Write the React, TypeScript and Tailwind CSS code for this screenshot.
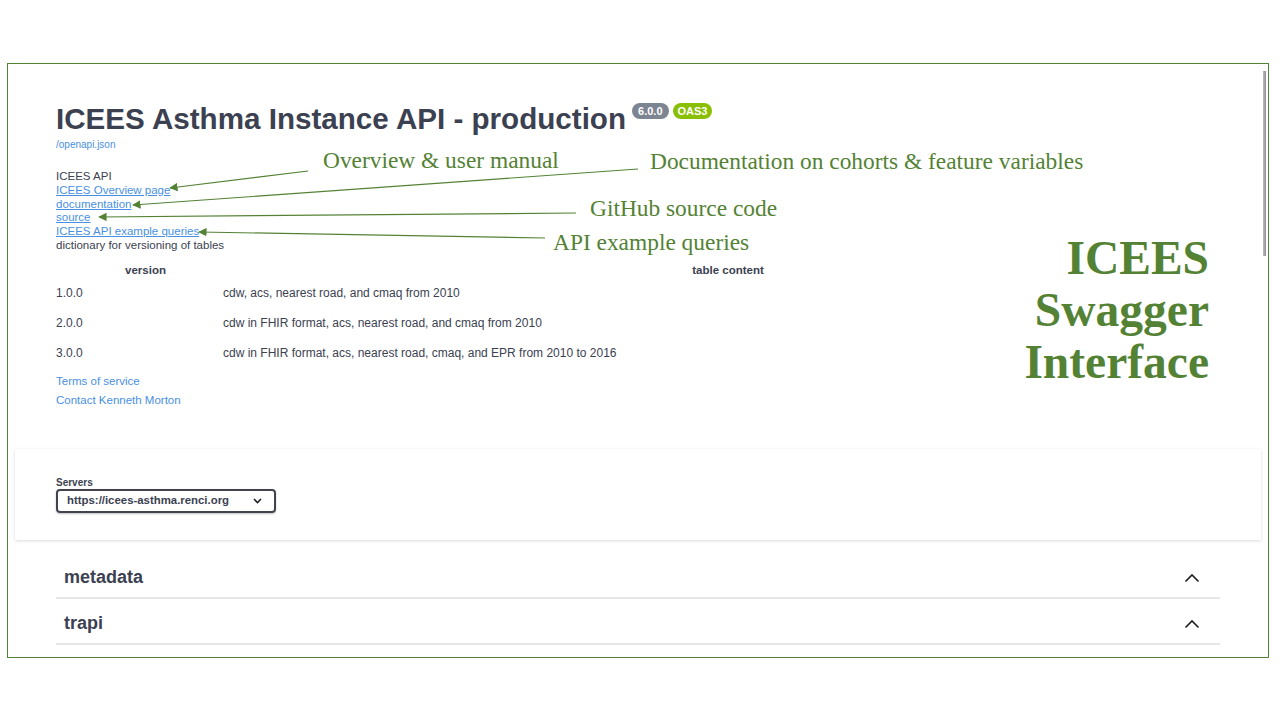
import React from "react";

const GREEN = "#548235";

const rows = [
  ["1.0.0", "cdw, acs, nearest road, and cmaq from 2010"],
  ["2.0.0", "cdw in FHIR format, acs, nearest road, and cmaq from 2010"],
  ["3.0.0", "cdw in FHIR format, acs, nearest road, cmaq, and EPR from 2010 to 2016"],
];

const ChevronUp = () => (
  <svg width="16" height="10" viewBox="0 0 16 10" className="mr-[20px]">
    <polyline points="1.5,8.5 8,2 14.5,8.5" fill="none" stroke="#1f1f1f" strokeWidth="1.6" />
  </svg>
);

const Arrows = () => (
  <svg className="absolute left-0 top-0 pointer-events-none" width="1280" height="720">
    <defs>
      <marker id="ah" viewBox="0 0 10 10" refX="9" refY="5" markerWidth="7" markerHeight="7" orient="auto-start-reverse">
        <path d="M0,0 L10,5 L0,10 z" fill={GREEN} />
      </marker>
    </defs>
    <g stroke={GREEN} strokeWidth="1.2" fill="none">
      <line x1="308" y1="171" x2="170" y2="188" markerEnd="url(#ah)" />
      <line x1="638" y1="169" x2="133" y2="205" markerEnd="url(#ah)" />
      <line x1="576" y1="213" x2="99" y2="217" markerEnd="url(#ah)" />
      <line x1="545" y1="238" x2="199" y2="232" markerEnd="url(#ah)" />
    </g>
  </svg>
);

const TagRow = ({ name }: { name: string }) => (
  <div className="flex items-center justify-between h-[46px] pt-[6px] border-b-2 border-[#e6e6e6]">
    <span className="pl-[8px] text-[18px] font-bold text-[#3b4151]">{name}</span>
    <ChevronUp />
  </div>
);

export default function App() {
  return (
    <div className="relative w-[1280px] h-[720px] bg-white overflow-hidden" style={{ fontFamily: '"Liberation Sans", Arial, sans-serif' }}>
      <div className="ml-[7px] mt-[63px] w-[1262px] h-[595px] border-[1.5px] border-solid border-[#548235] relative overflow-hidden">
        {/* scrollbar */}
        <div className="absolute right-[2px] top-[7px] w-[3px] h-[185px] bg-gradient-to-r from-[#bdbdbd] to-[#8f8f8f]" />

        {/* info */}
        <div className="pl-[48px] pt-[37px] text-[#3b4151]">
          <div className="flex items-start">
            <h1 className="text-[29.6px] font-bold leading-[36px] text-[#3b4151]">ICEES Asthma Instance API - production</h1>
            <div className="flex gap-[4px] ml-[6px] mt-[2px]">
              <span className="h-[16px] px-[6px] rounded-full bg-[#7d8492] text-white text-[11px] font-bold leading-[16px]">6.0.0</span>
              <span className="h-[16px] px-[5px] rounded-full bg-[#89bf04] text-white text-[11px] font-bold leading-[16px]">OAS3</span>
            </div>
          </div>
          <div className="mt-[1px] text-[10px] leading-[14px] text-[#4990e2]">/openapi.json</div>

          <div className="mt-[18px] text-[11.5px] leading-[13.8px]">
            <div>ICEES API</div>
            <div><a className="text-[#4990e2] underline">ICEES Overview page</a></div>
            <div><a className="text-[#4990e2] underline">documentation</a></div>
            <div><a className="text-[#4990e2] underline">source</a></div>
            <div><a className="text-[#4990e2] underline">ICEES API example queries</a></div>
            <div>dictionary for versioning of tables</div>
          </div>

          <table className="mt-[9px] w-[1177px] text-[12px] border-collapse">
            <thead>
              <tr className="h-[16px]">
                <th className="w-[167px] pl-[12px] text-center font-bold text-[11.5px] leading-[16px]">version</th>
                <th className="text-center font-bold text-[11.5px] leading-[16px]">table content</th>
              </tr>
            </thead>
            <tbody>
              {rows.map(([v, c]) => (
                <tr key={v} className="h-[30px]">
                  <td>{v}</td>
                  <td>{c}</td>
                </tr>
              ))}
            </tbody>
          </table>

          <div className="mt-[6px] text-[11.5px] leading-[14px] text-[#4990e2]">Terms of service</div>
          <div className="mt-[5px] text-[11.5px] leading-[14px] text-[#4990e2]">Contact Kenneth Morton</div>
        </div>

        {/* servers */}
        <div className="mx-[7px] mt-[42px] h-[91px] bg-white shadow-[0_1px_3px_rgba(0,0,0,0.15)] pl-[41px] pt-[28px]">
          <div className="text-[10px] font-bold leading-[12px] text-[#3b4151]">Servers</div>
          <div className="w-[220px] h-[24px] border-2 border-[#41444e] rounded-[4px] shadow-[0_1px_2px_rgba(0,0,0,0.25)] flex items-center justify-between pl-[9px] pr-[12px]">
            <span className="text-[11.4px] font-bold text-[#3b4151]">https://icees-asthma.renci.org</span>
            <svg width="9" height="6" viewBox="0 0 9 6">
              <polyline points="1,1 4.5,4.5 8,1" fill="none" stroke="#222" strokeWidth="1.6" />
            </svg>
          </div>
        </div>

        {/* tags */}
        <div className="ml-[48px] w-[1164px] mt-[13px]">
          <TagRow name="metadata" />
          <TagRow name="trapi" />
        </div>
      </div>

      {/* annotations */}
      <Arrows />
      <div className="absolute inset-0 pointer-events-none text-[#548235]" style={{ fontFamily: '"Liberation Serif", "Times New Roman", serif' }}>
        <span className="absolute left-[323px] top-[146px] text-[23.4px] leading-[28px]">Overview &amp; user manual</span>
        <span className="absolute left-[650px] top-[147px] text-[23.4px] leading-[28px]">Documentation on cohorts &amp; feature variables</span>
        <span className="absolute left-[590px] top-[194px] text-[23.4px] leading-[28px]">GitHub source code</span>
        <span className="absolute left-[553px] top-[228px] text-[23.4px] leading-[28px]">API example queries</span>
        <div className="absolute right-[71px] top-[232px] text-right text-[47.5px] font-bold leading-[52px]">
          <div>ICEES</div>
          <div>Swagger</div>
          <div>Interface</div>
        </div>
      </div>
    </div>
  );
}
